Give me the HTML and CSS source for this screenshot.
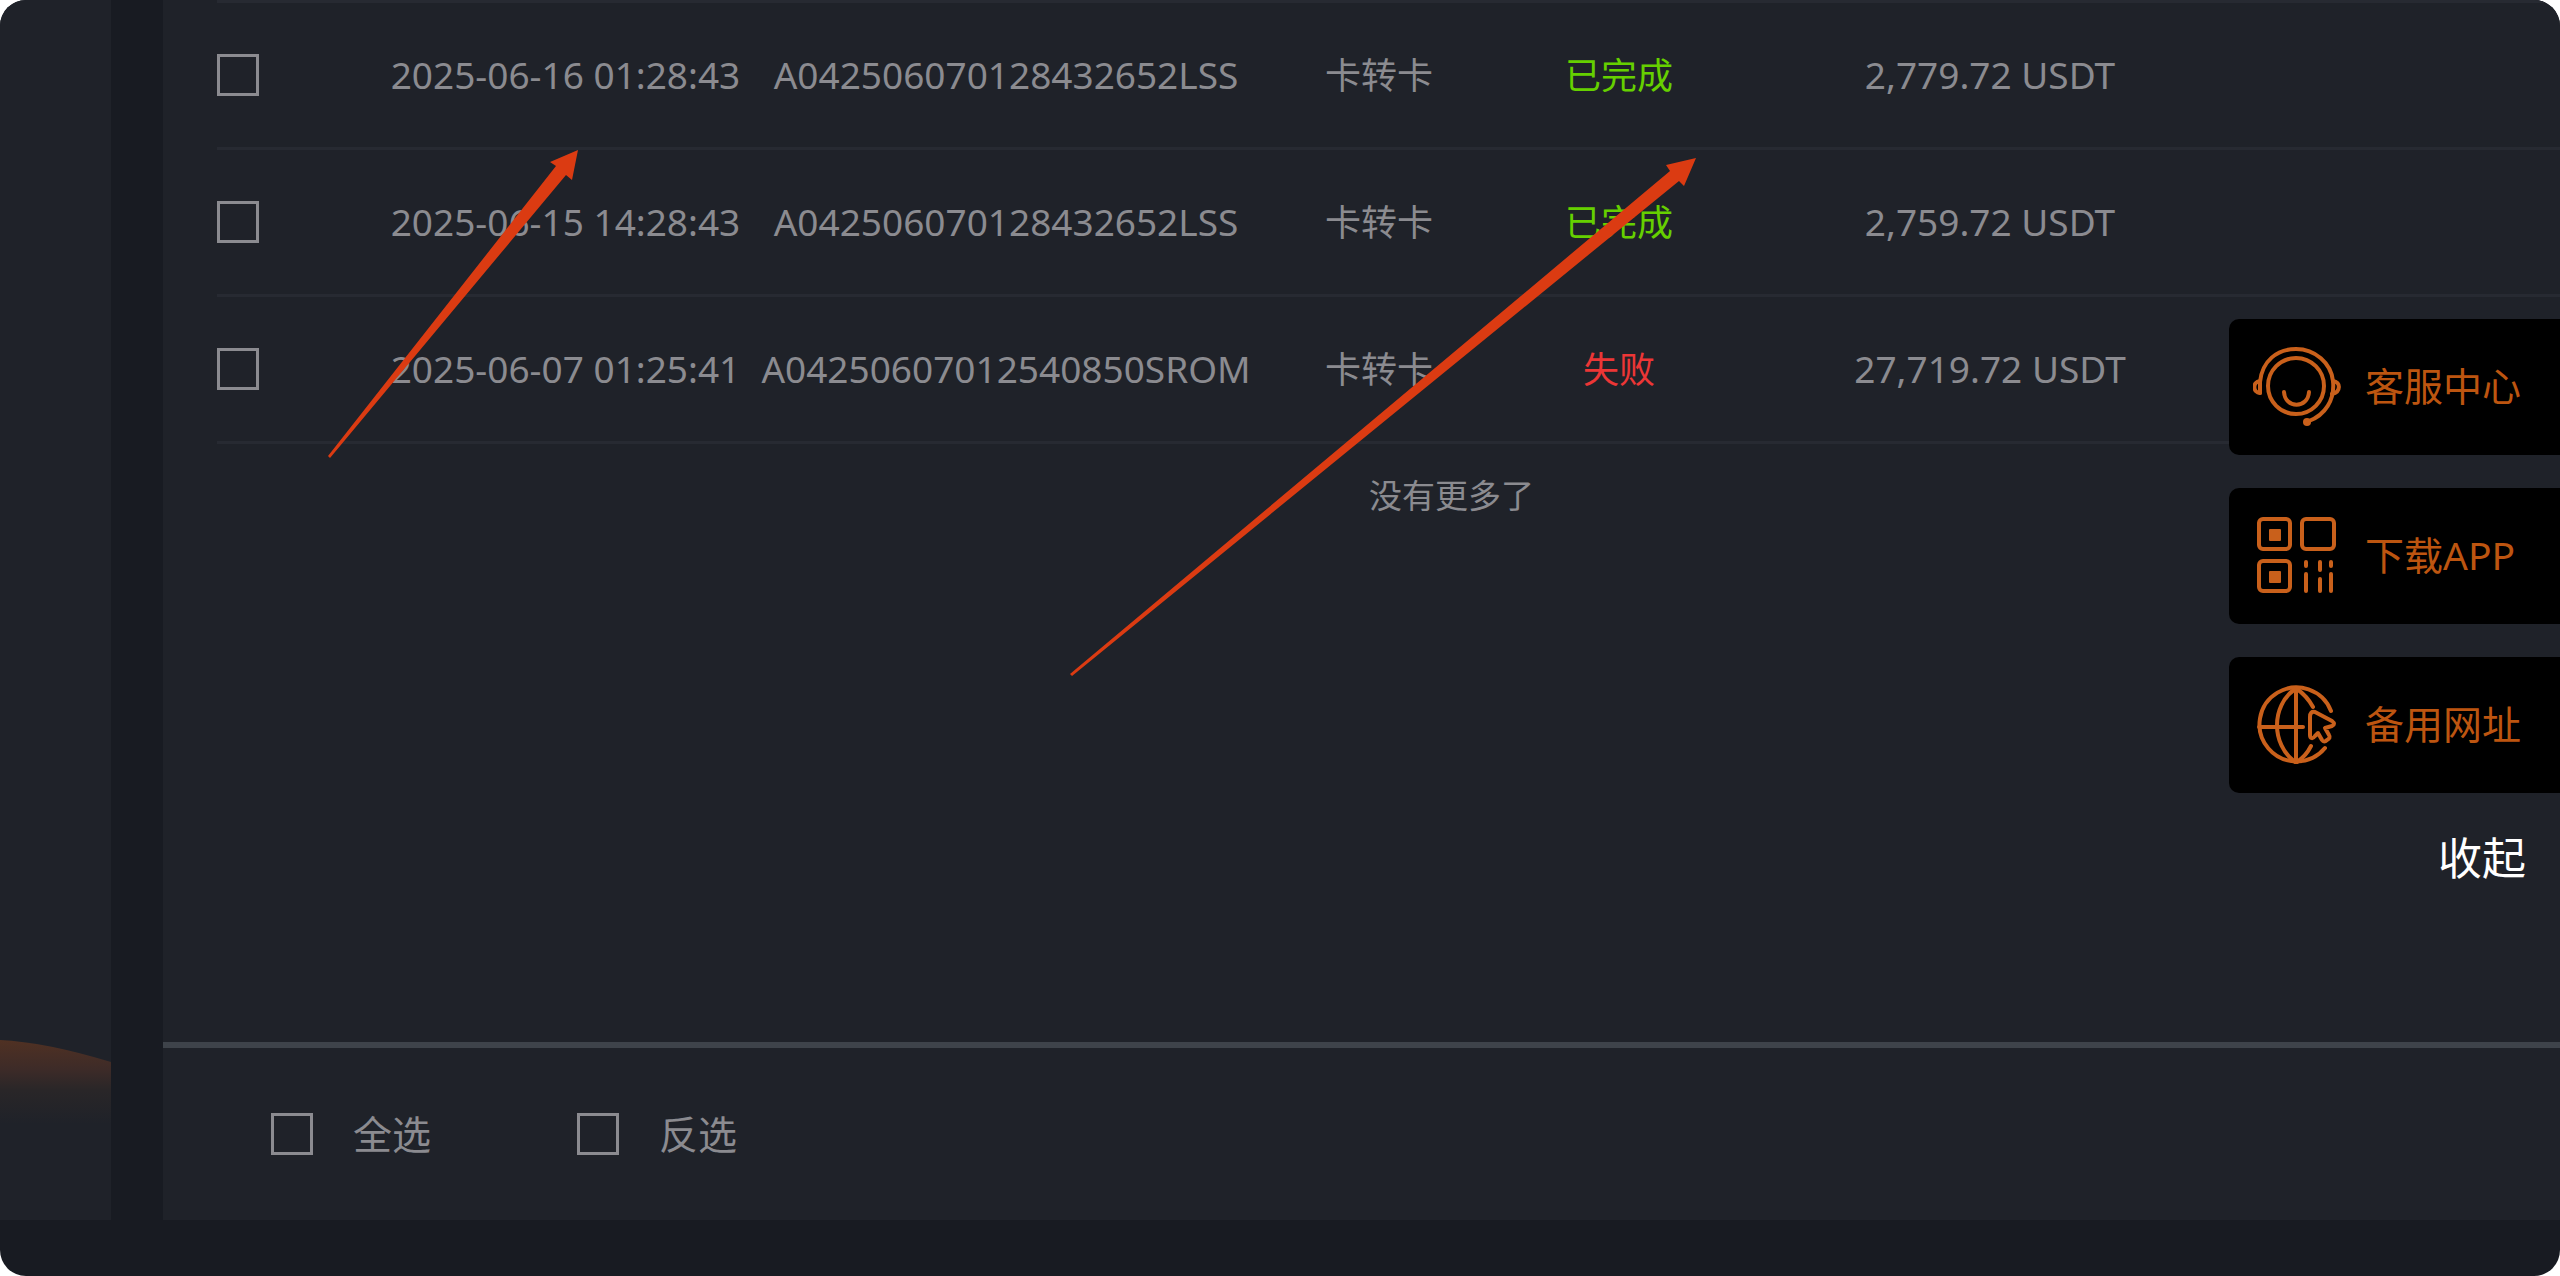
FILE: index.html
```html
<!DOCTYPE html>
<html lang="zh-CN">
<head>
    <meta charset="UTF-8">
    <meta name="viewport" content="width=device-width, initial-scale=1.0">
    <title>交易记录</title>
    <link rel="stylesheet" href="styles.css">
</head>
<body>
    <div class="page">
        <aside class="sidebar">
            <svg class="glow" viewBox="0 0 111 84" preserveAspectRatio="none" aria-hidden="true">
                <defs>
                    <linearGradient id="glow-fill" x1="0" y1="0" x2="0" y2="1">
                        <stop offset="0" stop-color="#503123"/>
                        <stop offset="0.35" stop-color="#3d2b28"/>
                        <stop offset="0.6" stop-color="#292628"/>
                        <stop offset="1" stop-color="#1f2229"/>
                    </linearGradient>
                </defs>
                <path d="M0 0 Q45 2 111 22 V84 H0 Z" fill="url(#glow-fill)"/>
            </svg>
        </aside>

        <main class="panel">
            <div class="records">
                <table>
                    <colgroup>
                        <col class="col-check">
                        <col class="col-date">
                        <col class="col-order">
                        <col class="col-type">
                        <col class="col-status">
                        <col class="col-amount">
                        <col>
                    </colgroup>
                    <tbody>
                        <tr>
                            <td class="check"><input type="checkbox" aria-label="2025-06-16 01:28:43"></td>
                            <td>2025-06-16 01:28:43</td>
                            <td>A042506070128432652LSS</td>
                            <td class="type">卡转卡</td>
                            <td class="type success">已完成</td>
                            <td>2,779.72 USDT</td>
                            <td></td>
                        </tr>
                        <tr>
                            <td class="check"><input type="checkbox" aria-label="2025-06-15 14:28:43"></td>
                            <td>2025-06-15 14:28:43</td>
                            <td>A042506070128432652LSS</td>
                            <td class="type">卡转卡</td>
                            <td class="type success">已完成</td>
                            <td>2,759.72 USDT</td>
                            <td></td>
                        </tr>
                        <tr>
                            <td class="check"><input type="checkbox" aria-label="2025-06-07 01:25:41"></td>
                            <td>2025-06-07 01:25:41</td>
                            <td>A04250607012540850SROM</td>
                            <td class="type">卡转卡</td>
                            <td class="type fail">失败</td>
                            <td>27,719.72 USDT</td>
                            <td></td>
                        </tr>
                    </tbody>
                </table>
                <p class="no-more">没有更多了</p>
            </div>

            <div class="toolbar">
                <label><input type="checkbox"> 全选</label>
                <label><input type="checkbox"> 反选</label>
            </div>
        </main>

        <nav class="float-menu">
            <a href="#service">
                <svg viewBox="0 -3 88 88" aria-hidden="true">
                    <circle cx="43" cy="41" r="28"/>
                    <path d="M7 48 V37 C9 16 24 4 43 4 C62 4 78 18 80 36 C82 55 72 70 56 76"/>
                    <path d="M7 36 C-1 37 0 48 7 48 M80 36 C88 37 88 47 79 49"/>
                    <path d="M31 47 C32 64 55 64 56 47"/>
                    <circle class="solid" cx="54" cy="77" r="4"/>
                </svg>
                客服中心
            </a>
            <a href="#app">
                <svg viewBox="0 -1 88 88" aria-hidden="true">
                    <rect x="6" y="7" width="31" height="30" rx="4"/>
                    <rect x="49" y="7" width="32" height="30" rx="4"/>
                    <rect x="6" y="49" width="31" height="30" rx="4"/>
                    <rect class="solid" x="16" y="17" width="12" height="12" rx="1"/>
                    <rect class="solid" x="16" y="59" width="12" height="12" rx="1"/>
                    <path d="M53 50 V54 M53 62 V79 M67 50 V58 M67 67 V79 M78 50 V54 M78 62 V79"/>
                </svg>
                下载APP
            </a>
            <a href="#backup">
                <svg viewBox="0 -2 88 88" aria-hidden="true">
                    <path d="M78 29 A37 37 0 1 0 72 66"/>
                    <path d="M43 7 V80 M6 45 H50"/>
                    <path d="M42 7 C18 24 18 62 42 80"/>
                    <path d="M44 7 Q54 14 60 25 M44 80 Q53 74 58 64"/>
                    <path d="M57 35 V53 C57 57 60 57 62 54 L65 51 L69 58 Q71 61 74 58 Q78 56 76 53 L72 46 L79 44 Q83 42 79 39 L62 30 Q57 29 57 35 Z"/>
                </svg>
                备用网址
            </a>
            <button type="button">收起</button>
        </nav>

        <svg class="arrows" width="1700" height="680" viewBox="0 0 1700 680" aria-hidden="true">
            <polygon points="578,150 572,180 566,175 330,458 328,456 556,166 550,162"/>
            <polygon points="1696,158 1684,186 1679,181 1072,676 1070,674 1670,171 1666,165"/>
        </svg>
    </div>
</body>
</html>
```
FILE: styles.css
```css
:root {
    --page-color: #181b22;
    --panel-color: #1f2229;
    --line-color: #272a32;
    --divider-color: #3e434a;
    --text-color: #8b8b90;
    --accent-color: #c9601b;
}

* {
    box-sizing: border-box;
}

body {
    margin: 0;
    background-color: #fff;
    color: var(--text-color);
    font-family: "Noto Sans", "Noto Sans CJK SC", sans-serif;
}

.page {
    position: relative;
    display: flex;
    gap: 52px;
    min-height: 100vh;
    padding-bottom: 56px;
    background-color: var(--page-color);
    border-radius: 26px;
    overflow: hidden;
}

.sidebar {
    flex: 0 0 111px;
    display: flex;
    flex-direction: column;
    justify-content: flex-end;
    padding-bottom: 96px;
    background-color: var(--panel-color);
}

.glow {
    display: block;
    width: 100%;
    height: 84px;
}

.panel {
    flex: 1;
    display: flex;
    flex-direction: column;
    background-color: var(--panel-color);
}

.records {
    flex: 1;
    padding-left: 54px;
}

table {
    width: 100%;
    table-layout: fixed;
    border-collapse: collapse;
    border-top: 3px solid var(--line-color);
}

.col-check {
    width: 153px;
}

.col-date {
    width: 391px;
}

.col-order {
    width: 490px;
}

.col-type {
    width: 256px;
}

.col-status {
    width: 224px;
}

.col-amount {
    width: 518px;
}

td {
    height: 147px;
    padding: 0;
    border-bottom: 3px solid var(--line-color);
    font-size: 37px;
    line-height: 48px;
    text-align: center;
    white-space: nowrap;
}

.check {
    text-align: left;
}

.type {
    padding-top: 2px;
    font-size: 36px;
}

input[type="checkbox"] {
    appearance: none;
    display: block;
    width: 42px;
    height: 42px;
    margin: 0;
    border: 3px solid var(--text-color);
}

.success {
    color: #66d000;
}

.fail {
    color: #ec3636;
}

.no-more {
    margin: 0;
    padding: 28px 0 0 126px;
    font-size: 33px;
    line-height: 48px;
    text-align: center;
}

.toolbar {
    display: flex;
    gap: 146px;
    padding: 62px 108px;
    border-top: 6px solid var(--divider-color);
}

.toolbar label {
    display: flex;
    align-items: center;
    gap: 40px;
    font-size: 39px;
    line-height: 48px;
}

.float-menu {
    position: absolute;
    top: 319px;
    right: 0;
    width: 331px;
    display: flex;
    flex-direction: column;
    gap: 33px;
}

.float-menu a {
    display: flex;
    align-items: center;
    gap: 24px;
    height: 136px;
    padding: 0 0 2px 24px;
    background-color: #000;
    border-radius: 10px 0 0 10px;
    color: #bd5510;
    font-size: 39px;
    line-height: 48px;
    text-decoration: none;
    white-space: nowrap;
}

.float-menu svg {
    flex: none;
    width: 88px;
    height: 88px;
    fill: none;
    stroke: var(--accent-color);
    stroke-width: 4;
    stroke-linecap: round;
    stroke-linejoin: round;
}

.float-menu .solid {
    fill: var(--accent-color);
    stroke: none;
}

.float-menu button {
    align-self: flex-end;
    padding: 2px 34px 0;
    background: none;
    border: none;
    color: #fff;
    font-family: inherit;
    font-size: 44px;
    line-height: 60px;
    cursor: pointer;
}

/* Marks over the records */
.arrows {
    position: absolute;
    top: 0;
    left: 0;
    fill: #db3b12;
    pointer-events: none;
}
```
